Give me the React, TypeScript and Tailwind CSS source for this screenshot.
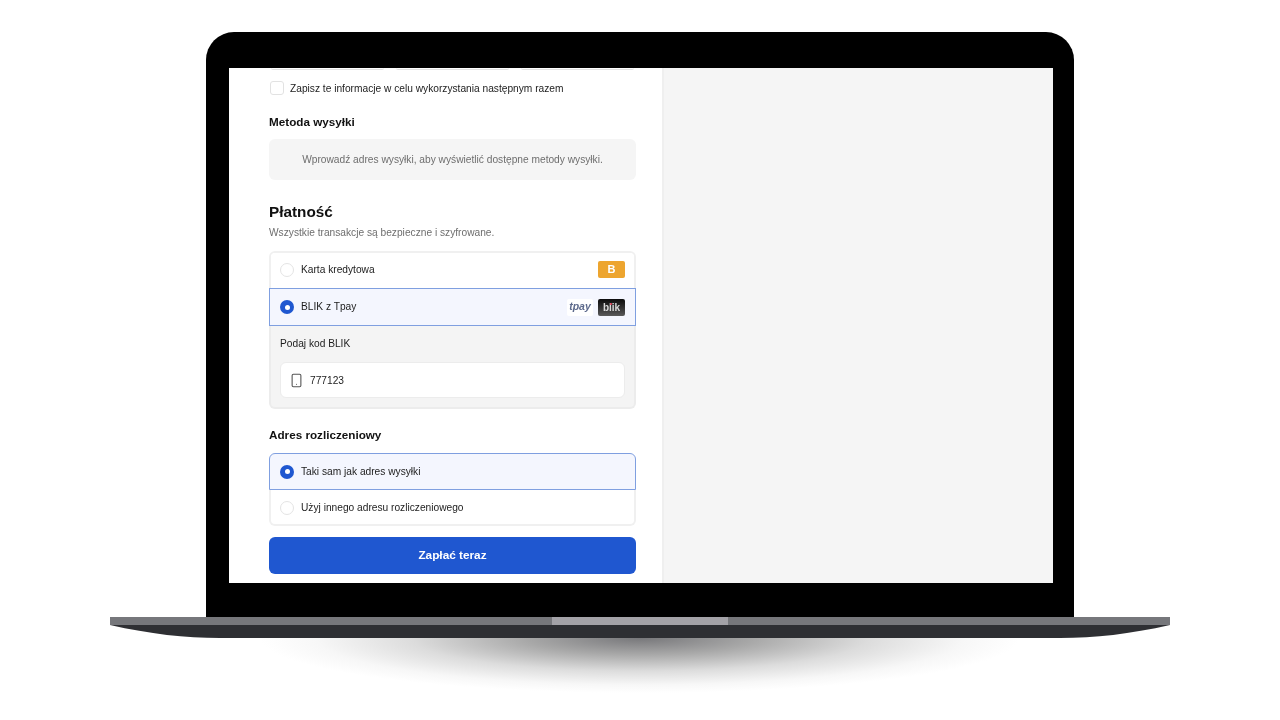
import { Smartphone } from 'lucide-react'

function Radio({ checked }: { checked?: boolean }) {
  if (checked) {
    return (
      <span className="flex h-[14px] w-[14px] shrink-0 items-center justify-center rounded-full bg-[#1f57d0]">
        <span className="h-[5px] w-[5px] rounded-full bg-white" />
      </span>
    )
  }
  return <span className="h-[14px] w-[14px] shrink-0 rounded-full border border-[#e4e4e4] bg-white" />
}

function Checkout() {
  return (
    <div className="flex h-full w-[435px] shrink-0 flex-col overflow-hidden border-r-2 border-[#efefef] bg-white pl-[40px] pr-[26px] blur-[0.5px]">
      <div className="flex h-[2px] gap-[12px] px-[2px]">
        <div className="flex-1 rounded-b border-b border-[#e4e4e4]" />
        <div className="flex-1 rounded-b border-b border-[#e4e4e4]" />
        <div className="flex-1 rounded-b border-b border-[#e4e4e4]" />
      </div>

      <label className="mt-[11px] flex h-[14px] items-center gap-[6px] pl-[1px] text-[10.2px] leading-[16px] text-[#1c1c1c]">
        <span className="h-[14px] w-[14px] rounded-[3px] border border-[#e2e2e2] bg-white" />
        <span className="pt-[1px]">Zapisz te informacje w celu wykorzystania następnym razem</span>
      </label>

      <h3 className="mt-[19px] h-[16px] text-[11.7px] font-bold leading-[16px] text-[#111]">Metoda wysyłki</h3>
      <div className="mt-[9px] flex h-[41px] items-center justify-center rounded-md bg-[#f5f5f5] text-[10.2px] text-[#6e6e6e]">
        Wprowadź adres wysyłki, aby wyświetlić dostępne metody wysyłki.
      </div>

      <h2 className="mt-[22px] h-[20px] text-[15.3px] font-bold leading-[20px] text-[#111]">Płatność</h2>
      <p className="mt-[3px] h-[16px] text-[10.2px] leading-[16px] text-[#6e6e6e]">Wszystkie transakcje są bezpieczne i szyfrowane.</p>

      <div className="mt-[10px] overflow-hidden rounded-t-md border-2 border-b-0 border-[#f0f0f0]">
        <div className="flex h-[35px] items-center gap-[7px] bg-white pb-[2px] pl-[9px] pr-[9px] text-[10.2px] text-[#1c1c1c]">
          <Radio />
          <span className="flex-1">Karta kredytowa</span>
          <span className="flex h-[17px] w-[27px] items-center justify-center rounded-[2px] bg-[#eda52f] text-[11px] font-bold text-white">B</span>
        </div>
      </div>
      <div className="flex h-[38px] items-center gap-[7px] border border-[#7f9fe0] bg-[#f4f6fe] pl-[10px] pr-[10px] text-[10.2px] text-[#1c1c1c]">
        <Radio checked />
        <span className="flex-1">BLIK z Tpay</span>
        <span className="flex items-center gap-[5px]">
          <span className="flex h-[17px] w-[26px] items-center justify-center rounded-[2px] bg-white text-[10.5px] font-bold italic text-[#5d6a8c]">tpay</span>
          <span className="relative flex h-[17px] w-[27px] items-center justify-center rounded-[2px] bg-gradient-to-b from-[#0c0c0c] to-[#5a5a5a] text-[10px] font-bold text-[#d8d8d8]">
            blik
            <span className="absolute left-[12px] top-[4px] h-[2px] w-[2px] rounded-full bg-[#e0334a]" />
          </span>
        </span>
      </div>
      <div className="flex h-[83px] flex-col rounded-b-md border-2 border-t-0 border-[#ececec] bg-[#f4f4f4] px-[9px]">
        <div className="mt-[10px] h-[16px] text-[10.2px] leading-[16px] text-[#1c1c1c]">Podaj kod BLIK</div>
        <div className="mt-[10px] flex h-[36px] items-center gap-[6px] rounded-md border border-[#ececec] bg-white pl-[8px] text-[10.2px] text-[#1c1c1c]">
          <Smartphone size={15} strokeWidth={1.75} className="text-[#555]" />
          <span className="pt-[1px]">777123</span>
        </div>
      </div>

      <h3 className="mt-[18px] h-[16px] text-[11.7px] font-bold leading-[16px] text-[#111]">Adres rozliczeniowy</h3>
      <div className="mt-[10px] flex h-[37px] items-center gap-[7px] rounded-t-md border border-[#7f9fe0] bg-[#f4f6fe] pl-[10px] text-[10.2px] text-[#1c1c1c]">
        <Radio checked />
        Taki sam jak adres wysyłki
      </div>
      <div className="flex h-[36px] items-center gap-[7px] rounded-b-md border-2 border-t-0 border-[#f0f0f0] bg-white pl-[9px] pt-[1px] text-[10.2px] text-[#1c1c1c]">
        <Radio />
        Użyj innego adresu rozliczeniowego
      </div>

      <button className="mt-[11px] h-[37px] shrink-0 rounded-md bg-[#1f57d0] text-[11.8px] font-bold text-white">Zapłać teraz</button>
    </div>
  )
}

export default function App() {
  return (
    <div className="flex h-[720px] w-[1280px] flex-col items-center overflow-hidden bg-white pt-[32px] font-['Liberation_Sans',Arial,sans-serif]">
      <div className="h-[585px] w-[868px] rounded-t-[28px] bg-black pb-[34px] pl-[23px] pr-[21px] pt-[36px]">
        <div className="flex h-full bg-[#f5f5f5]">
          <Checkout />
        </div>
      </div>

      <div className="flex h-[8px] w-[1060px] justify-center bg-[#76777b]">
        <div className="h-full w-[176px] bg-[#a3a2a7]" />
      </div>
      <svg width="1060" height="13" viewBox="0 0 1060 13" className="block shrink-0">
        <path d="M0 0H1060C1020 9 985 13 950 13H110C75 13 40 9 0 0Z" fill="#2e2f33" />
      </svg>
      <div className="h-[55px] w-[760px] bg-[radial-gradient(ellipse_50%_100%_at_50%_0%,#77777a_0%,#a8a8a8_30%,#dcdcdc_60%,#f7f7f7_85%,#ffffff_100%)]" />
    </div>
  )
}
